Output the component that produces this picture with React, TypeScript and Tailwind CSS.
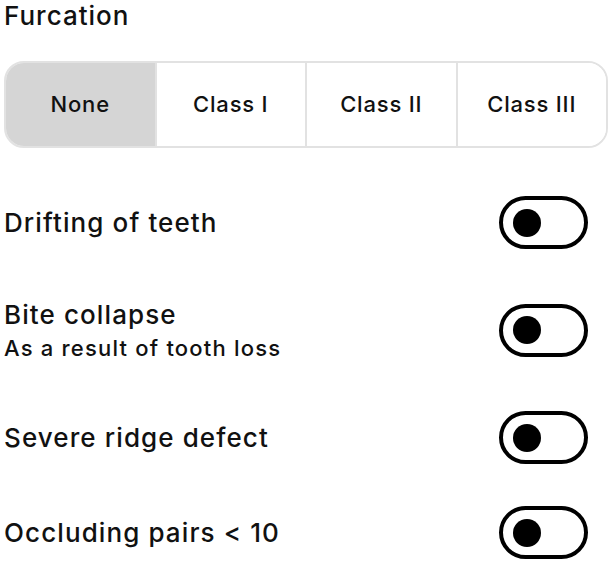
import React, { useState } from "react";

const options = ["None", "Class I", "Class II", "Class III"];

const rows: { label: string; sub?: string }[] = [
  { label: "Drifting of teeth" },
  { label: "Bite collapse", sub: "As a result of tooth loss" },
  { label: "Severe ridge defect" },
  { label: "Occluding pairs < 10" },
];

const Toggle: React.FC<{ on: boolean; onClick: () => void }> = ({ on, onClick }) => (
  <button
    onClick={onClick}
    className={`flex h-[53px] w-[89px] shrink-0 items-center rounded-full border-[4px] border-black bg-white px-[10px] ${
      on ? "justify-end" : "justify-start"
    }`}
  >
    <span className="block h-[28px] w-[28px] rounded-full bg-black" />
  </button>
);

export default function App() {
  const [selected, setSelected] = useState(0);
  const [toggles, setToggles] = useState([false, false, false, false]);

  return (
    <div className="h-[561px] w-[610px] bg-white pl-[4px] pr-[2px] text-[#111] font-['Inter',sans-serif]">
      {/* Furcation */}
      <div className="pt-[1px] text-[26px] font-medium leading-[30px] tracking-[1px]">Furcation</div>

      <div className="mt-[30px] flex h-[87px] overflow-hidden rounded-[20px] border-2 border-[#e2e2e2]">
        {options.map((opt, i) => (
          <button
            key={opt}
            onClick={() => setSelected(i)}
            className={`flex flex-1 items-center justify-center text-[22px] font-medium tracking-[0.8px] ${
              i > 0 ? "border-l-2 border-[#e2e2e2]" : ""
            } ${selected === i ? "bg-[#d5d5d5]" : "bg-white"}`}
          >
            {opt}
          </button>
        ))}
      </div>

      {/* Toggle rows */}
      <div className="mt-[48px] flex flex-col pr-[20px]">
        {rows.map((row, i) => (
          <div
            key={row.label}
            className={`flex items-center justify-between ${
              i === 1 ? "mt-[51px] h-[60px]" : i === 2 ? "mt-[51px] h-[53px]" : i === 3 ? "mt-[42px] h-[53px]" : "h-[53px]"
            }`}
          >
            <div>
              <div className="text-[26px] font-medium leading-[32px] tracking-[1.1px]">{row.label}</div>
              {row.sub && (
                <div className="mt-[4px] text-[22px] font-medium leading-[26px] tracking-[1.2px]">{row.sub}</div>
              )}
            </div>
            <Toggle
              on={toggles[i]}
              onClick={() => setToggles(toggles.map((t, j) => (j === i ? !t : t)))}
            />
          </div>
        ))}
      </div>
    </div>
  );
}
